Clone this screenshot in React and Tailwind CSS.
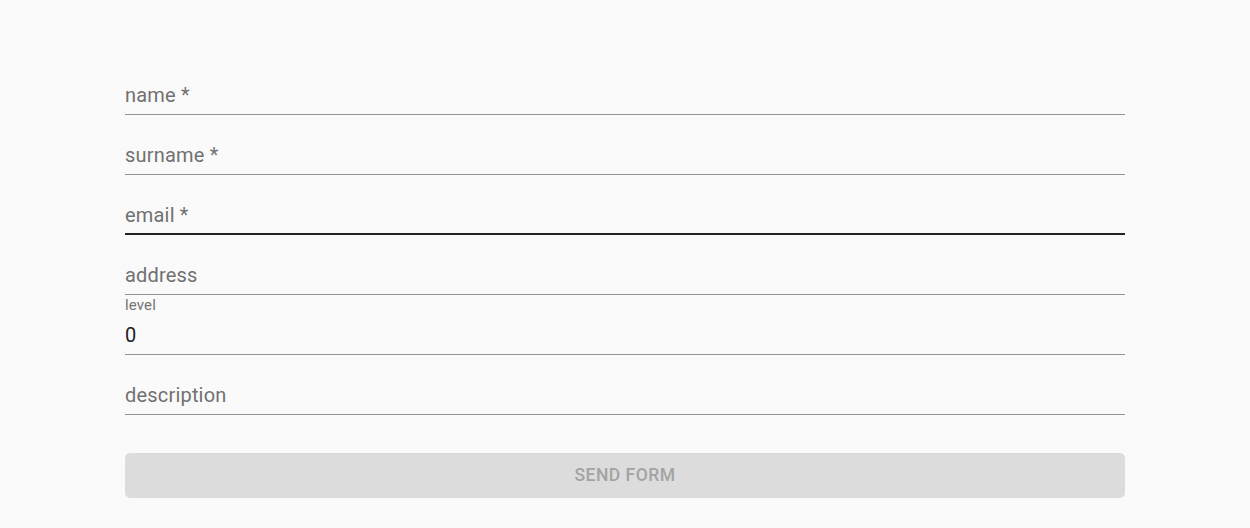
export default function App() {
  const font = { fontFamily: "Roboto, 'Liberation Sans', sans-serif" };
  const Field = ({ label, focused }) => (
    <div className="relative h-[60px]">
      <div className="absolute left-0 top-[26px] text-[20px] leading-[28.75px] tracking-[0.19px] text-[#717171]">{label}</div>
      <div className={focused ? "absolute left-0 right-0 bottom-0 h-[2px] bg-[#222222]" : "absolute left-0 right-0 bottom-0 h-px bg-[#949494]"} />
    </div>
  );
  return (
    <div className="w-full h-[528px] bg-[#fafafa]" style={font}>
      <div className="mx-auto w-[1000px] pt-[55px] flex flex-col">
        <Field label="name *" />
        <Field label="surname *" />
        <Field label="email *" focused />
        <Field label="address" />
        <div className="relative h-[60px]">
          <div className="absolute left-0 top-0 text-[15px] leading-[21.5px] tracking-[0.14px] text-[#737373]">level</div>
          <div className="absolute left-0 top-[26px] text-[20px] leading-[28.75px] tracking-[0.19px] text-[#222222]">0</div>
          <div className="absolute left-0 right-0 bottom-0 h-px bg-[#949494]" />
        </div>
        <Field label="description" />
        <button
          disabled
          className="mt-[38px] h-[45px] w-full rounded-[5px] bg-[#dcdcdc] text-[17.5px] font-medium uppercase tracking-[0.5px] text-[#a3a3a3]"
        >
          SEND FORM
        </button>
      </div>
    </div>
  );
}
